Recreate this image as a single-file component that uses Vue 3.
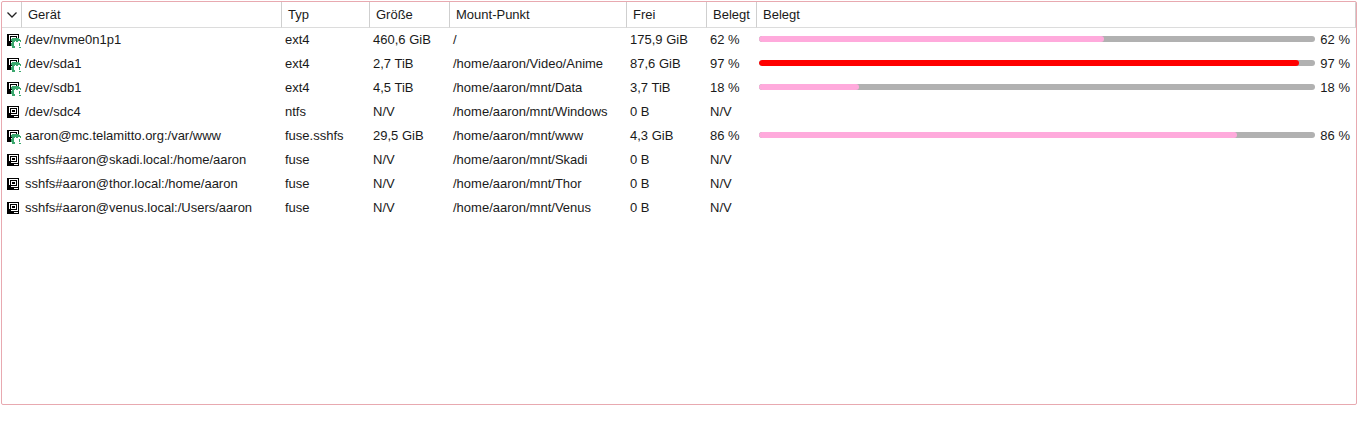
<script setup>
const columns = [
  { label: '', cls: 'icon' },
  { label: 'Gerät', cls: 'device' },
  { label: 'Typ', cls: 'type' },
  { label: 'Größe', cls: 'size' },
  { label: 'Mount-Punkt', cls: 'mount' },
  { label: 'Frei', cls: 'free' },
  { label: 'Belegt', cls: 'percent' },
  { label: 'Belegt', cls: 'usage' },
]
const rows = [
  { device: '/dev/nvme0n1p1', type: 'ext4', size: '460,6 GiB', mount: '/', free: '175,9 GiB', used: 62 },
  { device: '/dev/sda1', type: 'ext4', size: '2,7 TiB', mount: '/home/aaron/Video/Anime', free: '87,6 GiB', used: 97 },
  { device: '/dev/sdb1', type: 'ext4', size: '4,5 TiB', mount: '/home/aaron/mnt/Data', free: '3,7 TiB', used: 18 },
  { device: '/dev/sdc4', type: 'ntfs', size: 'N/V', mount: '/home/aaron/mnt/Windows', free: '0 B', used: null },
  { device: 'aaron@mc.telamitto.org:/var/www', type: 'fuse.sshfs', size: '29,5 GiB', mount: '/home/aaron/mnt/www', free: '4,3 GiB', used: 86 },
  { device: 'sshfs#aaron@skadi.local:/home/aaron', type: 'fuse', size: 'N/V', mount: '/home/aaron/mnt/Skadi', free: '0 B', used: null },
  { device: 'sshfs#aaron@thor.local:/home/aaron', type: 'fuse', size: 'N/V', mount: '/home/aaron/mnt/Thor', free: '0 B', used: null },
  { device: 'sshfs#aaron@venus.local:/Users/aaron', type: 'fuse', size: 'N/V', mount: '/home/aaron/mnt/Venus', free: '0 B', used: null },
]
</script>

<template>
  <main class="panel">
    <table>
      <colgroup>
        <col v-for="c in columns" :key="c.cls" :class="'col-' + c.cls" />
      </colgroup>
      <thead>
        <tr>
          <th v-for="c in columns" :key="c.cls" :class="c.cls" scope="col">
            <button type="button" :aria-label="c.label || 'Sortieren'">
              <svg v-if="c.cls === 'icon'" width="12" height="8" viewBox="0 0 12 8" aria-hidden="true">
                <path d="M1.500 1.500 6 6l4.500-4.500" fill="none" stroke="#222" stroke-width="1.300" />
              </svg>
              <template v-else>{{ c.label }}</template>
            </button>
          </th>
        </tr>
      </thead>
      <tbody>
        <tr v-for="r in rows" :key="r.device">
          <td colspan="2" class="device">
            <div class="name">
              <svg width="15" height="14" viewBox="0 0 15 14" shape-rendering="crispEdges" aria-hidden="true">
                <path d="M0 0h12v12H0z" fill="#000" />
                <path d="M2 1h9v8H2zM3 2v6h7V2z" fill="#fff" fill-rule="evenodd" />
                <path d="M4 3h5v4H4zM5 4v2h3V4z" fill="#fff" fill-rule="evenodd" />
                <path d="M2 7h2v2H2z" fill="#000" />
                <path d="M7 10h4v1H7z" fill="#fff" />
                <g v-if="r.used !== null">
                  <path d="M7 7h7v7H7z" fill="#fff" />
                  <path d="M5 4h7v1h1v1h1v2h-1V7h-2v1H9V7H8v1H7v4h1v2H5v-2H4V9h1V7H4V5h1z" fill="#3aa76d" />
                  <path d="M12 9h1v3h-1zM12 13h2v1h-2z" fill="#3aa76d" />
                </g>
              </svg>
              <span>{{ r.device }}</span>
            </div>
          </td>
          <td>{{ r.type }}</td>
          <td>{{ r.size }}</td>
          <td>{{ r.mount }}</td>
          <td>{{ r.free }}</td>
          <td>{{ r.used === null ? 'N/V' : r.used + ' %' }}</td>
          <td class="usage">
            <div v-if="r.used !== null" class="meter">
              <div class="track">
                <div class="fill" :class="{ full: r.used > 95 }" :style="{ width: r.used + '%' }"></div>
              </div>
              <span>{{ r.used }} %</span>
            </div>
          </td>
        </tr>
      </tbody>
    </table>
  </main>
</template>

<style>
body {
  background: #fff;
}
</style>

<style scoped>
.panel {
  box-sizing: border-box;
  height: calc(100vh - 21px);
  min-height: 240px;
  margin: 1px 1px 0;
  border: 1px solid #e8a9b0;
  border-radius: 2px;
  overflow: auto;
  font: 13px/24px "Liberation Sans", Arial, sans-serif;
  color: #1a1a1a;
}
table {
  width: 100%;
  table-layout: fixed;
  border-collapse: separate;
  border-spacing: 0;
}
.col-icon { width: 20px; }
.col-device { width: 260px; }
.col-type { width: 88px; }
.col-size { width: 80px; }
.col-mount { width: 177px; }
.col-free { width: 80px; }
.col-percent { width: 50px; }
th {
  box-sizing: border-box;
  height: 26px;
  padding: 0;
  border-right: 1px solid #cfcfcf;
  border-bottom: 1px solid #dcdcdc;
  font-weight: normal;
}
th button {
  display: block;
  width: 100%;
  height: 25px;
  padding: 0 0 0 6px;
  border: 0;
  background: none;
  font: inherit;
  color: inherit;
  text-align: left;
  white-space: nowrap;
}
th.icon button {
  display: flex;
  align-items: center;
  justify-content: center;
  padding: 0;
}
td {
  height: 24px;
  padding: 0 0 0 3px;
  white-space: nowrap;
}
td.device {
  padding-left: 5px;
}
.name {
  display: flex;
  align-items: center;
  gap: 3px;
}
.name svg {
  margin-top: 2px;
}
td.usage {
  padding: 0 6px 0 2px;
}
.meter {
  display: flex;
  align-items: center;
  gap: 5px;
}
.track {
  flex: 1;
  height: 6px;
  margin-bottom: 2px;
  border-radius: 3px;
  background: #b1b1b1;
  overflow: hidden;
}
.fill {
  height: 6px;
  border-radius: 3px;
  background: #ffaadc;
}
.fill.full {
  background: #f00;
}
</style>
